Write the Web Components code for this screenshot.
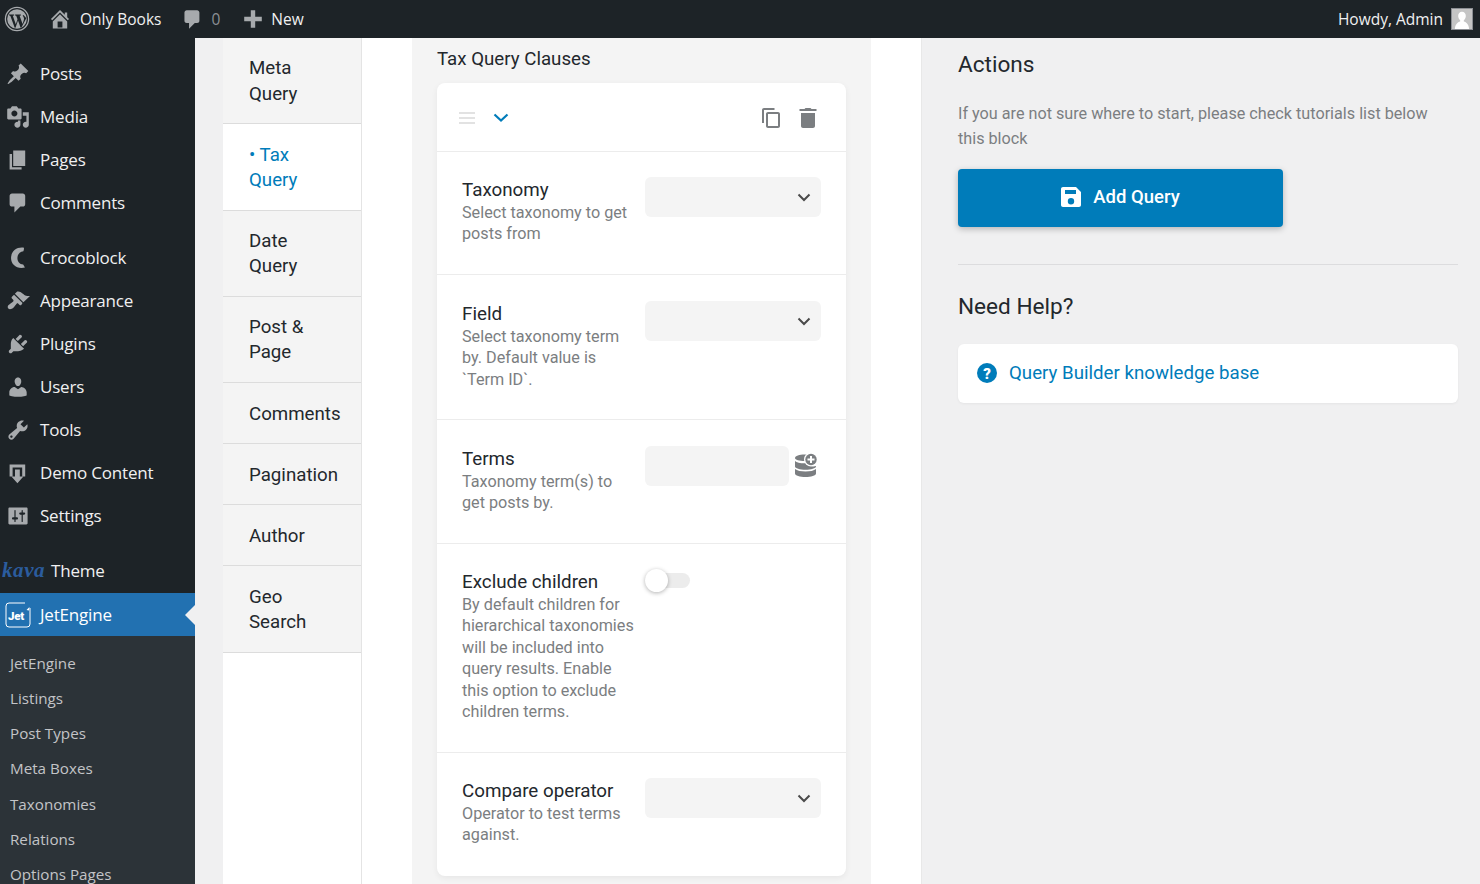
<!DOCTYPE html>
<html><head><meta charset="utf-8"><style>
html,body{margin:0;padding:0;height:884px;overflow:hidden;background:#f0f0f1;font-family:Roboto,sans-serif}
</style></head><body>
<wp-app></wp-app>
<script>
const I={
pin:'<path d="M10.44 3.02l1.82-1.82 6.36 6.35-1.83 1.82c-1.05-.68-2.48-.57-3.41.36l-.75.75c-.92.93-1.04 2.35-.35 3.41l-1.83 1.82-2.41-2.41-2.8 2.79c-.42.42-3.38 2.71-3.8 2.29s1.86-3.39 2.28-3.81l2.79-2.79L4.1 9.36l1.83-1.82c1.05.69 2.48.57 3.4-.36l.75-.75c.93-.92 1.05-2.35.36-3.41z"/>',
media:'<path d="M13 11V4c0-.55-.45-1-1-1h-1.67L9 1H5L3.67 3H2c-.55 0-1 .45-1 1v7c0 .55.45 1 1 1h10c.55 0 1-.45 1-1zM7 4.5c1.38 0 2.5 1.12 2.5 2.5S8.380 9.500 7 9.500 4.500 8.380 4.500 7 5.620 4.500 7 4.500zM14 6h5v10.500c0 1.380-1.120 2.500-2.500 2.500S14 17.880 14 16.500s1.120-2.500 2.500-2.500c.17 0 .34.020.5.050V9h-3V6zm-4 8.050V13h2v3.500c0 1.380-1.120 2.500-2.500 2.500S7 17.880 7 16.500 8.120 14 9.500 14c.17 0 .34.020.5.050z"/>',
pages:'<path d="M6 15V2h10v13H6zm-1 1h8v2H3V5h2v11z"/>',
comment:'<path d="M5 2h9c1.100 0 2 .9 2 2v7c0 1.100-.9 2-2 2h-2l-5 5v-5H5c-1.100 0-2-.9-2-2V4c0-1.100.9-2 2-2z"/>',
croco:'<path d="M15 1.500C9 .5 4.200 4.500 4.200 10c0 5.500 4.800 9.500 11.600 8-.5-.8-1-1.500-1.500-2.500-3-.3-4.800-2.600-4.800-5.500 0-3 2-5.200 5-5.600.4-1 .5-2 .5-2.900z"/>',
brush:'<path d="M14.480 11.060L7.410 3.990l1.500-1.500c.5-.56 2.300-.47 3.510.32 1.210.800 1.430 1.280 2.910 2.100 1.180.64 2.450 1.260 4.670.85zm-.71.71L6.700 4.700 4.930 6.470c-.39.39-.39 1.020 0 1.410l1.060 1.060c.39.390.39 1.030 0 1.420-.6.600-1.430 1.110-2.210 1.690-.35.260-.7.530-1.010.84C1.430 13.230.960 15.320 1.930 16.290c.97.980 3.060.500 4.400-.84.3-.31.580-.66.840-1.020.58-.78 1.090-1.600 1.690-2.200.39-.39 1.020-.39 1.410 0l1.060 1.060c.39.390 1.020.390 1.410 0z"/>',
plugin:'<path d="M13.110 4.360L9.870 7.600 8 5.730l3.240-3.240c.35-.34 1.050-.2 1.560.32.520.51.660 1.210.31 1.550zm-8 1.770l.91-1.120 9.010 9.010-1.190.84c-.71.710-2.630 1.160-3.820 1.160H6.140L4.900 17.260c-.59.590-1.540.59-2.120 0-.59-.58-.59-1.530 0-2.120l1.240-1.240v-3.880c0-1.130.4-3.190 1.090-3.890zm7.260 3.970l3.240-3.240c.340-.350 1.040-.210 1.550.31.520.51.660 1.210.31 1.550l-3.240 3.250z"/>',
users:'<path d="M10 9.250c-2.270 0-2.730-3.440-2.730-3.440C7 4.020 7.820 2 9.970 2c2.160 0 2.980 2.020 2.710 3.810 0 0-.41 3.440-2.680 3.440zm0 2.570L12.720 10c2.390 0 4.520 2.330 4.520 4.530v2.490s-3.650 1.130-7.240 1.130c-3.650 0-7.240-1.130-7.240-1.130v-2.490c0-2.250 1.940-4.480 4.470-4.480z"/>',
tools:'<path d="M16.680 9.770c-1.340 1.340-3.300 1.670-4.950.99l-5.410 6.520c-.99.990-2.590.99-3.580 0s-.99-2.590 0-3.570l6.520-5.420c-.68-1.650-.35-3.610.99-4.950 1.280-1.280 3.120-1.620 4.720-1.060l-2.890 2.890 2.820 2.820 2.860-2.870c.53 1.590.18 3.400-1.080 4.650zM3.810 16.210c.4.390 1.030.39 1.420 0 .38-.39.38-1.020 0-1.410-.39-.39-1.020-.39-1.420 0-.39.390-.39 1.020 0 1.410z"/>',
demo:'<path d="M3 3h13v10h-2.500V5.500h-8V13H3z"/><path d="M7.500 7h4v6h3l-5 5.500-5-5.500h3z"/>',
settings:'<path fill-rule="evenodd" d="M18 16V4c0-.55-.45-1-1-1H3c-.55 0-1 .45-1 1v12c0 .55.45 1 1 1h14c.55 0 1-.45 1-1zM8 11h1c.55 0 1 .45 1 1s-.45 1-1 1H8v1.500c0 .28-.22.500-.5.500s-.5-.22-.5-.5V13H6c-.55 0-1-.45-1-1s.45-1 1-1h1V5.500c0-.28.22-.5.5-.5s.5.22.5.5V11zm5-2h-1c-.55 0-1-.45-1-1s.45-1 1-1h1V5.500c0-.28.22-.5.5-.5s.5.22.5.5V7h1c.55 0 1 .45 1 1s-.45 1-1 1h-1v5.500c0 .28-.22.500-.5.500s-.5-.22-.5-.5V9z"/>',
};
const svg=(p,s=20,c='#a7aaad')=>`<svg width="${s}" height="${s}" viewBox="0 0 20 20" fill="${c}">${p}</svg>`;
const def=(n,html)=>customElements.define(n,class extends HTMLElement{
 constructor(){super();this.attachShadow({mode:'open'}).innerHTML=html;}
});

def('wp-adminbar',`<style>
:host{display:flex;align-items:center;height:38px;background:#1d2327;color:#f0f0f1;font:15.500px/38px "Open Sans",sans-serif}
.i{display:flex;align-items:center}
.r{margin-left:auto;display:flex;align-items:center;padding-right:7px}
.av{width:20px;height:20px;background:#c8c8c8;border:1px solid #8c8f94;margin-left:8px;display:block}
.dim{color:#8c8f94}
</style>
<span class="i" style="margin-left:4px"><svg width="26" height="26" viewBox="0 0 26 26"><circle cx="13" cy="13" r="11.600" fill="none" stroke="#a7aaad" stroke-width="1.300"/><circle cx="13" cy="13" r="9.800" fill="#a7aaad"/><path d="M4.500 8.500h5.600v1l-1.300.2 3 8.500 1.700-5-1.300-3.500-1.100-.2v-1h5.800v1l-1.300.2 3 8.300 1.200-3.900c.5-1.600.2-2.900-1.200-4.400l1-.7 2.700 3.200-4.900 9.400-.8.200-2.600-7.200-2.500 7.200-.8-.1-4.300-11.800-1-.3z" fill="#1d2327"/></svg></span>
<span class="i" style="margin-left:18px">${svg('<path d="M16 8.500l1.530 1.530-1.060 1.060L10 4.620l-6.470 6.470-1.060-1.060L10 2.500l4 4v-2h2v4zm-6-2.460l6 5.990V18H4v-5.970zM12 17v-5H8v5h4z"/>',24)}</span>
<span style="margin-left:8px">Only Books</span>
<span class="i" style="margin-left:20px">${svg(I.comment,23)}</span>
<span class="dim" style="margin-left:7px">0</span>
<span class="i" style="margin-left:22px">${svg('<path d="M8 2h4v6h6v4h-6v6H8v-6H2V8h6z"/>',22)}</span>
<span style="margin-left:7px">New</span>
<span class="r">Howdy, Admin<svg class="av" viewBox="0 0 21 21"><rect width="21" height="21" fill="#c5c5c5"/><path d="M10.500 3c2.500 0 4 1.900 4 4.300 0 2-1 3.600-2.100 4.500v1.300c2.800.9 5.100 2.600 5.600 7.900H3c.5-5.300 2.800-7 5.600-7.900v-1.300C7.500 10.900 6.500 9.300 6.500 7.300 6.500 4.900 8 3 10.500 3z" fill="#fff"/></svg></span>`);

def('wp-menu-item',`<style>
 :host{display:block;height:43px;color:#f0f0f1;position:relative}
 .row{display:flex;align-items:center;height:41px;font:17px "Open Sans",sans-serif;letter-spacing:-.2px}
 :host([current]) .row{height:43px}
 .ic{width:36px;margin-right:4px;display:flex;justify-content:center}
 :host([current]){background:#2271b1;color:#fff}
 :host([current])::after{content:"";position:absolute;right:0;top:50%;margin-top:-10px;border:10px solid transparent;border-right-color:#f0f0f1;border-left:0}
 ::slotted(svg){display:block}
 </style><div class="row"><span class="ic"><slot name="i"></slot></span><slot></slot></div>`);
def('wp-sub-item',`<style>
 :host{display:block;height:35.200px;padding-left:10px;color:#c3c4c7;font:15.200px/35.200px "Open Sans",sans-serif}
 </style><slot></slot>`);
const mi=(k,t)=>`<wp-menu-item>${svg(I[k],24).replace('<svg','<svg slot="i"')}${t}</wp-menu-item>`;
def('wp-sidebar',`<style>
:host{display:block;background:#1d2327;overflow:hidden;height:846px;padding-top:15px;box-sizing:border-box}
.gap{height:12px}
.kava{font:italic 700 21px "Liberation Serif",serif;color:#2b5c9e;display:block;width:36px;margin-left:4px;letter-spacing:.6px}
.sub{background:#2c3338;padding-top:9.800px;height:300px}
</style>
${mi('pin','Posts')}${mi('media','Media')}${mi('pages','Pages')}${mi('comment','Comments')}
<div class="gap"></div>
${mi('croco','Crocoblock')}${mi('brush','Appearance')}${mi('plugin','Plugins')}${mi('users','Users')}${mi('tools','Tools')}${mi('demo','Demo Content')}${mi('settings','Settings')}
<div class="gap"></div>
<wp-menu-item><span slot="i" class="kava">kava</span><span style="margin-left:11px">Theme</span></wp-menu-item>
<wp-menu-item current><svg slot="i" width="26" height="26" viewBox="0 0 26 26"><path d="M20 1H4a3 3 0 0 0-3 3v18a3 3 0 0 0 3 3h18a3 3 0 0 0 3-3V6" fill="none" stroke="#fff" stroke-width="1"/><path d="M21.500 8l3-3-.5 3.500z" fill="#fff"/><text x="3" y="17.500" font-family="Roboto" font-weight="900" font-size="11.500" fill="#fff">Jet</text></svg>JetEngine</wp-menu-item>
<div class="sub"><wp-sub-item>JetEngine</wp-sub-item><wp-sub-item>Listings</wp-sub-item><wp-sub-item>Post Types</wp-sub-item><wp-sub-item>Meta Boxes</wp-sub-item><wp-sub-item>Taxonomies</wp-sub-item><wp-sub-item>Relations</wp-sub-item><wp-sub-item>Options Pages</wp-sub-item></div>`);

def('query-tab',`<style>
 :host{display:block;padding:18.400px 20px 16.500px 26px;font:18.700px/25.200px Roboto,sans-serif;color:#23282d;background:#f4f4f4;border-bottom:1px solid #dcdcdc}
 :host([active]){background:#fff;color:#007cba}
 </style><slot></slot>`);
def('query-tabs',`<style>:host{display:block;width:189px;flex:none;height:846px;background:#fff;padding-right:50px;box-sizing:border-box}
.w{height:100%;border-right:1px solid #e4e4e4}
</style><div class="w">
<query-tab>Meta<br>Query</query-tab><query-tab active>• Tax<br>Query</query-tab><query-tab>Date<br>Query</query-tab><query-tab>Post &amp;<br>Page</query-tab><query-tab>Comments</query-tab><query-tab>Pagination</query-tab><query-tab>Author</query-tab><query-tab>Geo<br>Search</query-tab></div>`);

def('field-row',`<style>
 :host{display:flex;padding:25px;border-top:1px solid #ececec;box-sizing:border-box}
 .l{width:175px;margin-right:8px;flex:none;padding-top:1px}
 .n{font:18.800px/24px Roboto,sans-serif;color:#23282d}
 .d{font:16.200px/21.400px Roboto,sans-serif;color:#7b7e81}
 .c{flex:1;display:flex}
 </style><div class="l"><div class="n"><slot name="n"></slot></div><div class="d"><slot name="d"></slot></div></div><div class="c"><slot></slot></div>`);
def('select-box',`<style>:host{display:flex;align-items:center;justify-content:flex-end;width:176px;height:40px;background:#f4f4f4;border-radius:6px;padding-right:10px;box-sizing:border-box}</style><svg width="14" height="9" viewBox="0 0 14 9" fill="none" stroke="#4a4a4a" stroke-width="2"><path d="M1.500 1.500L7 7l5.500-5.500"/></svg>`);

def('query-editor',`<style>
:host{display:block;flex:none;width:509px;background:#fff;box-sizing:border-box;padding-right:50px;height:846px}
.in{background:#f4f4f4;height:100%;padding:9px 25px 0;box-sizing:border-box}
h3{margin:0 0 11px;font:400 18.700px/25px Roboto,sans-serif;color:#23282d}
.card{background:#fff;border-radius:8px;box-shadow:0 2px 6px rgba(0,0,0,.06)}
.hd{display:flex;align-items:center;height:68px;padding:2px 29px 0 22px;box-sizing:border-box}
.hd svg{display:block}
.sp{flex:1}
.tin{display:flex;align-items:flex-start}
.inp{width:144px;height:40px;background:#f4f4f4;border-radius:6px}
.sw{position:relative;width:45px;height:15px;background:#ececec;border-radius:8px;margin-top:4px}
.sw i{position:absolute;left:0;top:-4px;width:23px;height:23px;border-radius:50%;background:#fff;box-shadow:0 1px 4px rgba(0,0,0,.3)}
</style>
<div class="in"><h3>Tax Query Clauses</h3>
<div class="card">
<div class="hd">
<svg width="16" height="14" viewBox="0 0 16 14" fill="#e2e2e2"><rect y="1" width="16" height="2"/><rect y="6" width="16" height="2"/><rect y="11" width="16" height="2"/></svg>
<svg style="margin-left:18px" width="16" height="10" viewBox="0 0 16 10" fill="none" stroke="#007cba" stroke-width="2.200"><path d="M1.500 1.500L8 7.500l6.500-6"/></svg>
<span class="sp"></span>
<svg width="20" height="22" viewBox="0 0 20 22" fill="#7b7e81"><path d="M13.500 1H3c-1.100 0-2 .9-2 2v13h2V3h10.500zM17 5H7c-1.100 0-2 .9-2 2v12c0 1.100.9 2 2 2h10c1.100 0 2-.9 2-2V7c0-1.100-.9-2-2-2zm0 14H7V7h10z"/></svg>
<svg style="margin-left:18px" width="18" height="22" viewBox="0 0 18 22" fill="#7b7e81"><path d="M2 6h14v13c0 1.100-.9 2-2 2H4c-1.100 0-2-.9-2-2zM12.500 2h5v2H.500V2h5l1-1h5z"/></svg>
</div>
<field-row style="height:123px"><span slot="n">Taxonomy</span><span slot="d">Select taxonomy to get posts from</span><select-box></select-box></field-row>
<field-row style="height:145px;padding-top:26px"><span slot="n">Field</span><span slot="d">Select taxonomy term by. Default value is \`Term ID\`.</span><select-box></select-box></field-row>
<field-row style="height:124px;padding-top:26px"><span slot="n">Terms</span><span slot="d">Taxonomy term(s) to get posts by.</span><div class="tin"><div class="inp"></div><svg style="margin-left:5px;margin-top:7px" width="24" height="25" viewBox="0 0 24 25" fill="#7b7e81"><path d="M1 5c0-2 4.500-3.500 9.500-3.500 1.500 0 3 .1 4.300.4A7 7 0 0 0 12.500 8c-.6.1-1.300.1-2 .1C5.500 8.100 1 6.800 1 5zM1 8c1.500 1.500 5 2.300 9.500 2.300 1.200 0 2.400-.1 3.500-.3A7 7 0 0 0 22 13v.500c0 1.800-5 3.200-10.500 3.200S1 15.300 1 13.500zM1 16c2 1.700 6 2.500 10.500 2.500S20 17.700 22 16v4.500c0 2-5 3.500-10.500 3.500S1 22.500 1 20.500z"/><circle cx="17" cy="6.500" r="7" fill="#fff"/><circle cx="17" cy="6.500" r="5.700" fill="#7b7e81"/><path d="M16 3h2v2.500h2.500v2H18V10h-2V7.500h-2.500v-2H16z" fill="#fff"/></svg></div></field-row>
<field-row style="height:209px"><span slot="n">Exclude children</span><span slot="d">By default children for hierarchical taxonomies will be included into query results. Enable this option to exclude children terms.</span><div class="sw"><i></i></div></field-row>
<field-row style="height:124px"><span slot="n">Compare operator</span><span slot="d">Operator to test terms against.</span><select-box></select-box></field-row>
</div></div>`);

def('side-panel',`<style>
:host{display:block;flex:1;border-left:1px solid #e8e8e8;padding:0 22px 0 36px;box-sizing:border-box;color:#23282d}
h2{margin:0;font:400 22.600px/32px Roboto,sans-serif;color:#23282d}
p{margin:20px 0 18px;max-width:490px;font:16.200px/25px Roboto,sans-serif;color:#7b7e81}
.btn{display:flex;align-items:center;justify-content:center;width:325px;height:58px;padding-bottom:2px;box-sizing:border-box;background:#007cba;border-radius:4px;color:#fff;font:500 18.500px Roboto,sans-serif;box-shadow:0 2px 6px rgba(0,0,0,.25)}
.btn svg{margin-right:12px}
hr{border:0;border-top:1px solid #dcdcde;margin:37px 0 26px}
.kb{display:flex;align-items:center;height:59px;padding-bottom:2px;box-sizing:border-box;margin-top:21px;background:#fff;border-radius:6px;padding-left:19px;color:#007cba;font:18.700px Roboto,sans-serif;box-shadow:0 1px 3px rgba(0,0,0,.05)}
.kb svg{margin-right:12px}
</style>
<h2 style="margin-top:11px">Actions</h2>
<p>If you are not sure where to start, please check tutorials list below this block</p>
<div class="btn"><svg width="20" height="20" viewBox="0 0 20 20" fill="#fff"><path fill-rule="evenodd" d="M2 0h13l5 5v13c0 1.100-.9 2-2 2H2c-1.100 0-2-.9-2-2V2C0 .9.900 0 2 0zm2 3v4h11V3zm6 8a3.200 3.200 0 1 0 0 6.400 3.200 3.200 0 0 0 0-6.400z"/></svg>Add Query</div>
<hr>
<h2>Need Help?</h2>
<div class="kb"><svg width="20" height="20" viewBox="0 0 20 20"><circle cx="10" cy="10" r="10" fill="#007cba"/><text x="10" y="15.500" text-anchor="middle" font-family="Roboto" font-weight="900" font-size="15" fill="#fff">?</text></svg>Query Builder knowledge base</div>`);

def('wp-app',`<style>
:host{display:grid;grid-template-rows:38px 846px;grid-template-columns:195px 1fr;width:1480px;height:884px;overflow:hidden}
wp-adminbar{grid-column:1/3}
main{display:flex;overflow:hidden;padding-left:28px;background:#f0f0f1;min-width:0}
</style>
<wp-adminbar></wp-adminbar><wp-sidebar></wp-sidebar>
<main><query-tabs></query-tabs><query-editor></query-editor><side-panel></side-panel></main>`);
</script>
</body></html>
